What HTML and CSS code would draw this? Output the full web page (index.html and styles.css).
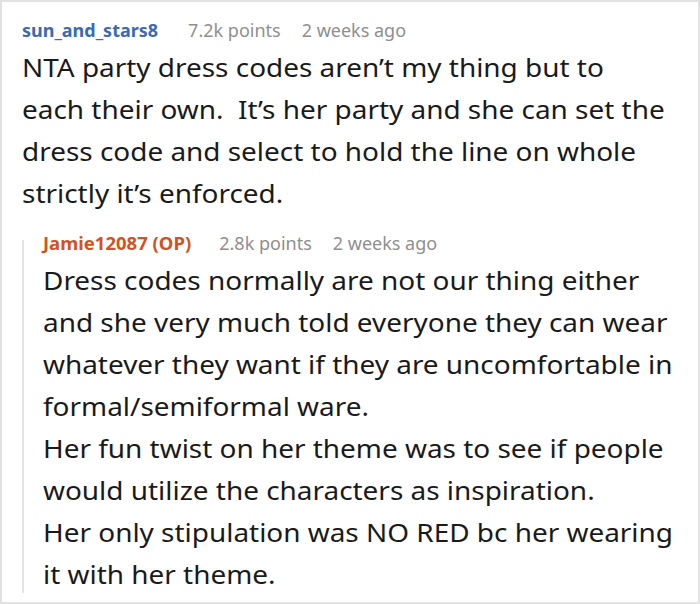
FILE: index.html
```html
<!DOCTYPE html>
<html lang="en">
<head>
<meta charset="utf-8">
<link rel="stylesheet" href="styles.css">
</head>
<body>
<div class="thread">
  <div class="comment">
    <div class="meta">
      <span class="user">sun_and_stars8</span>
      <span class="info">7.2k points</span>
      <span class="info">2 weeks ago</span>
    </div>
    <p class="body">NTA party dress codes aren’t my thing but to<br>each their own.&nbsp; It’s her party and she can set the<br>dress code and select to hold the line on whole<br>strictly it’s enforced.</p>
    <div class="reply">
      <div class="meta">
        <span class="user op">Jamie12087 (OP)</span>
        <span class="info">2.8k points</span>
        <span class="info">2 weeks ago</span>
      </div>
      <p class="body">Dress codes normally are not our thing either<br>and she very much told everyone they can wear<br>whatever they want if they are uncomfortable in<br>formal/semiformal ware.<br>Her fun twist on her theme was to see if people<br>would utilize the characters as inspiration.<br>Her only stipulation was NO RED bc her wearing<br>it with her theme.</p>
    </div>
  </div>
</div>
</body>
</html>
```
FILE: styles.css
```css
html, body {
  margin: 0;
  padding: 0;
  background: #ffffff;
}
.thread {
  box-sizing: border-box;
  width: 700px;
  height: 604px;
  border: 2px solid #e2e2e2;
  padding: 14px 0 0 20px;
  font-family: "Noto Sans", "Open Sans", sans-serif;
  color: #1a1a1a;
  overflow: hidden;
}
.meta {
  display: flex;
  align-items: baseline;
  font-size: 18px;
  line-height: 28px;
  white-space: nowrap;
}
.user {
  font-weight: 700;
  color: #3a6ab4;
}
.user.op {
  color: #d4521f;
  font-size: 18.5px;
}
.info {
  color: #8f8f8f;
  margin-left: 30px;
}
.op + .info {
  margin-left: 28px;
}
.info + .info {
  margin-left: 21px;
}
.body {
  margin: 2px 0 0;
  font-size: 26px;
  line-height: 42px;
  white-space: nowrap;
  transform: scaleX(1.074);
  transform-origin: 0 0;
}
.reply {
  position: relative;
  margin-top: 15px;
  padding-left: 21px;
}
.reply::before {
  content: "";
  position: absolute;
  left: 0;
  top: 11px;
  bottom: 2px;
  width: 2px;
  background: #e4e4e4;
}
```
